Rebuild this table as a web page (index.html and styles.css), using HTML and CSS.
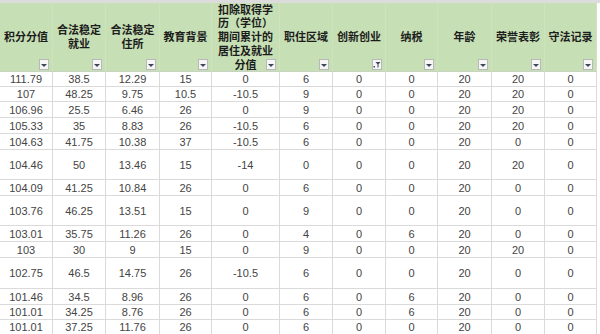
FILE: index.html
```html
<!DOCTYPE html>
<html lang="zh-CN">
<head>
<meta charset="utf-8">
<title>积分表</title>
<link rel="stylesheet" href="styles.css">
</head>
<body>
<div class="topbar"></div>
<div class="sheet">
  <div class="h">积分分值<span class="fb"></span></div>
  <div class="h">合法稳定就业<span class="fb"></span></div>
  <div class="h">合法稳定住所<span class="fb"></span></div>
  <div class="h">教育背景<span class="fb"></span></div>
  <div class="h">扣除取得学历（学位）期间累计的居住及就业分值<span class="fb"></span></div>
  <div class="h">职住区域<span class="fb"></span></div>
  <div class="h">创新创业<span class="fb fb-on"><svg viewBox="0 0 10 11" width="10" height="11"><path d="M3.5 3h5l-2 2.3v3.2h-1V5.3z" fill="#3d4656"/><rect x="1.5" y="7" width="1.5" height="1.5" fill="#3d4656"/></svg></span></div>
  <div class="h">纳税<span class="fb"></span></div>
  <div class="h">年龄<span class="fb"></span></div>
  <div class="h">荣誉表彰<span class="fb"></span></div>
  <div class="h">守法记录<span class="fb"></span></div>

  <div class="c">111.79</div><div class="c">38.5</div><div class="c">12.29</div><div class="c">15</div><div class="c">0</div><div class="c">6</div><div class="c">0</div><div class="c">0</div><div class="c">20</div><div class="c">20</div><div class="c">0</div>
  <div class="c">107</div><div class="c">48.25</div><div class="c">9.75</div><div class="c">10.5</div><div class="c">-10.5</div><div class="c">9</div><div class="c">0</div><div class="c">0</div><div class="c">20</div><div class="c">20</div><div class="c">0</div>
  <div class="c">106.96</div><div class="c">25.5</div><div class="c">6.46</div><div class="c">26</div><div class="c">0</div><div class="c">9</div><div class="c">0</div><div class="c">0</div><div class="c">20</div><div class="c">20</div><div class="c">0</div>
  <div class="c">105.33</div><div class="c">35</div><div class="c">8.83</div><div class="c">26</div><div class="c">-10.5</div><div class="c">6</div><div class="c">0</div><div class="c">0</div><div class="c">20</div><div class="c">20</div><div class="c">0</div>
  <div class="c">104.63</div><div class="c">41.75</div><div class="c">10.38</div><div class="c">37</div><div class="c">-10.5</div><div class="c">6</div><div class="c">0</div><div class="c">0</div><div class="c">20</div><div class="c">0</div><div class="c">0</div>
  <div class="c">104.46</div><div class="c">50</div><div class="c">13.46</div><div class="c">15</div><div class="c">-14</div><div class="c">0</div><div class="c">0</div><div class="c">0</div><div class="c">20</div><div class="c">20</div><div class="c">0</div>
  <div class="c">104.09</div><div class="c">41.25</div><div class="c">10.84</div><div class="c">26</div><div class="c">0</div><div class="c">6</div><div class="c">0</div><div class="c">0</div><div class="c">20</div><div class="c">0</div><div class="c">0</div>
  <div class="c">103.76</div><div class="c">46.25</div><div class="c">13.51</div><div class="c">15</div><div class="c">0</div><div class="c">9</div><div class="c">0</div><div class="c">0</div><div class="c">20</div><div class="c">0</div><div class="c">0</div>
  <div class="c">103.01</div><div class="c">35.75</div><div class="c">11.26</div><div class="c">26</div><div class="c">0</div><div class="c">4</div><div class="c">0</div><div class="c">6</div><div class="c">20</div><div class="c">0</div><div class="c">0</div>
  <div class="c">103</div><div class="c">30</div><div class="c">9</div><div class="c">15</div><div class="c">0</div><div class="c">9</div><div class="c">0</div><div class="c">0</div><div class="c">20</div><div class="c">20</div><div class="c">0</div>
  <div class="c">102.75</div><div class="c">46.5</div><div class="c">14.75</div><div class="c">26</div><div class="c">-10.5</div><div class="c">6</div><div class="c">0</div><div class="c">0</div><div class="c">20</div><div class="c">0</div><div class="c">0</div>
  <div class="c">101.46</div><div class="c">34.5</div><div class="c">8.96</div><div class="c">26</div><div class="c">0</div><div class="c">6</div><div class="c">0</div><div class="c">6</div><div class="c">20</div><div class="c">0</div><div class="c">0</div>
  <div class="c">101.01</div><div class="c">34.25</div><div class="c">8.76</div><div class="c">26</div><div class="c">0</div><div class="c">6</div><div class="c">0</div><div class="c">6</div><div class="c">20</div><div class="c">0</div><div class="c">0</div>
  <div class="c">101.01</div><div class="c">37.25</div><div class="c">11.76</div><div class="c">26</div><div class="c">0</div><div class="c">6</div><div class="c">0</div><div class="c">0</div><div class="c">20</div><div class="c">0</div><div class="c">0</div>
</div>
</body>
</html>
```

FILE: styles.css
```css
html, body {
  margin: 0;
  padding: 0;
  background: #ffffff;
  overflow: hidden;
}

.topbar {
  height: 3px;
  background: #dcdcdc;
}

.sheet {
  display: grid;
  width: 597px;
  grid-template-columns: 53px 53px 54px 52px 68px 53px 53px 52px 54px 53px 52px;
  grid-template-rows: 69px 15px 15px 16px 16px 16px 30px 16px 30px 16px 16px 31px 16px 15px 15px;
}

.h {
  position: relative;
  box-sizing: border-box;
  display: flex;
  align-items: center;
  justify-content: center;
  text-align: center;
  padding: 0 3px;
  background: #c6dfb4;
  border-right: 1px solid #cde3be;
  border-bottom: 1px solid #c9d3c2;
  font-family: "Noto Sans CJK SC", "Noto Sans", sans-serif;
  font-weight: 700;
  font-size: 11px;
  line-height: 13.8px;
  color: #1c1c1c;
}

.fb {
  position: absolute;
  right: 3px;
  bottom: 1px;
  width: 10px;
  height: 11px;
  box-sizing: border-box;
  border: 1px solid #b8b8b8;
  background: #f6f6f6;
}

.fb::after {
  content: "";
  position: absolute;
  left: 1px;
  top: 4px;
  border-left: 3px solid transparent;
  border-right: 3px solid transparent;
  border-top: 3px solid #3d4656;
}

.fb-on::after {
  display: none;
}

.fb-on svg {
  position: absolute;
  left: -1px;
  top: -1px;
  display: block;
}

.c {
  box-sizing: border-box;
  display: flex;
  align-items: center;
  justify-content: center;
  border-right: 1px solid #dadada;
  border-bottom: 1px solid #dadada;
  font-family: "Liberation Sans", Arial, sans-serif;
  font-size: 11px;
  color: #444444;
}
```
